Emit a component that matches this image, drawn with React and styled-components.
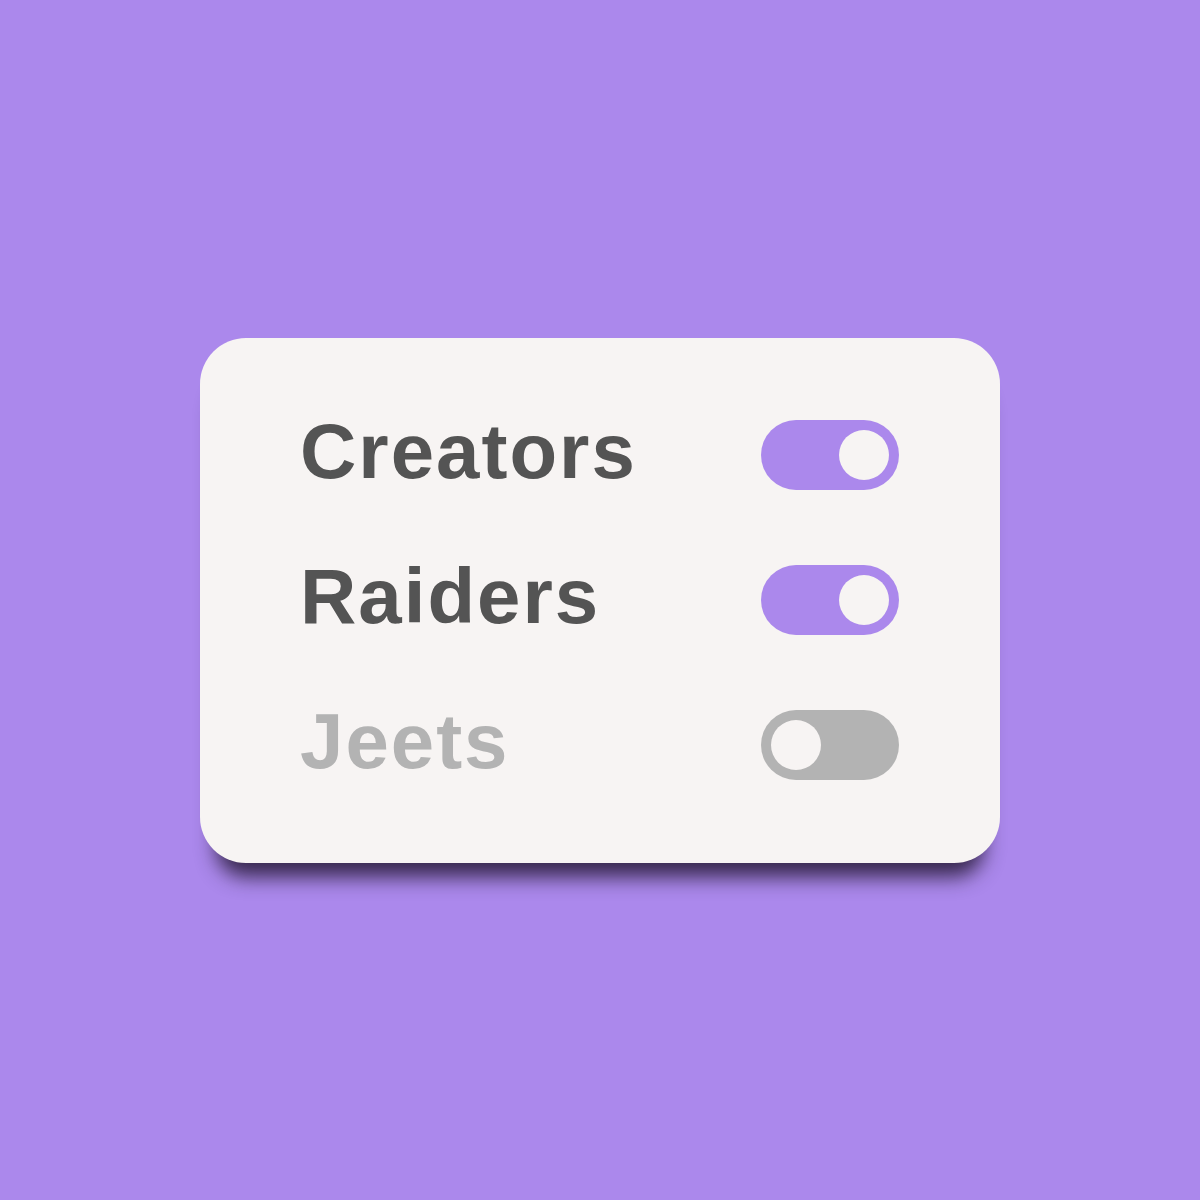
import React from "react";
import styled, { createGlobalStyle } from "styled-components";

const Global = createGlobalStyle`
  html, body { margin: 0; padding: 0; background: #ab88ec; }
  body { font-family: "Liberation Sans", Arial, sans-serif; }
`;

const Page = styled.div`
  width: 1200px;
  height: 1200px;
  background: #ab88ec;
  display: flex;
  align-items: center;
  justify-content: center;
`;

const Card = styled.div`
  width: 800px;
  box-sizing: border-box;
  padding: 82px 101px 83px 100px;
  background: #f7f4f3;
  border-radius: 46px;
  box-shadow: 0 30px 20px -16px rgba(35, 24, 50, 0.85);
  display: flex;
  flex-direction: column;
  gap: 75px;
`;

const Row = styled.div`
  display: flex;
  align-items: center;
  justify-content: space-between;
  height: 70px;
`;

const Label = styled.span`
  font-family: "Liberation Sans", Arial, sans-serif;
  font-weight: 700;
  font-size: 78px;
  letter-spacing: 2px;
  line-height: 1;
  color: ${(p) => (p.$off ? "#b3b3b3" : "#545454")};
  transform: translateY(-4px);
`;

const Track = styled.div`
  width: 138px;
  height: 70px;
  box-sizing: border-box;
  padding: 10px;
  border-radius: 35px;
  background: ${(p) => (p.$on ? "#ab88ec" : "#b3b3b3")};
  display: flex;
  justify-content: ${(p) => (p.$on ? "flex-end" : "flex-start")};
`;

const Knob = styled.div`
  width: 50px;
  height: 50px;
  border-radius: 50%;
  background: #f7f4f3;
`;

const items = [
  { label: "Creators", on: true },
  { label: "Raiders", on: true },
  { label: "Jeets", on: false },
];

export default function App() {
  return (
    <>
      <Global />
      <Page>
        <Card>
          {items.map((it) => (
            <Row key={it.label}>
              <Label $off={!it.on}>{it.label}</Label>
              <Track $on={it.on}>
                <Knob />
              </Track>
            </Row>
          ))}
        </Card>
      </Page>
    </>
  );
}
